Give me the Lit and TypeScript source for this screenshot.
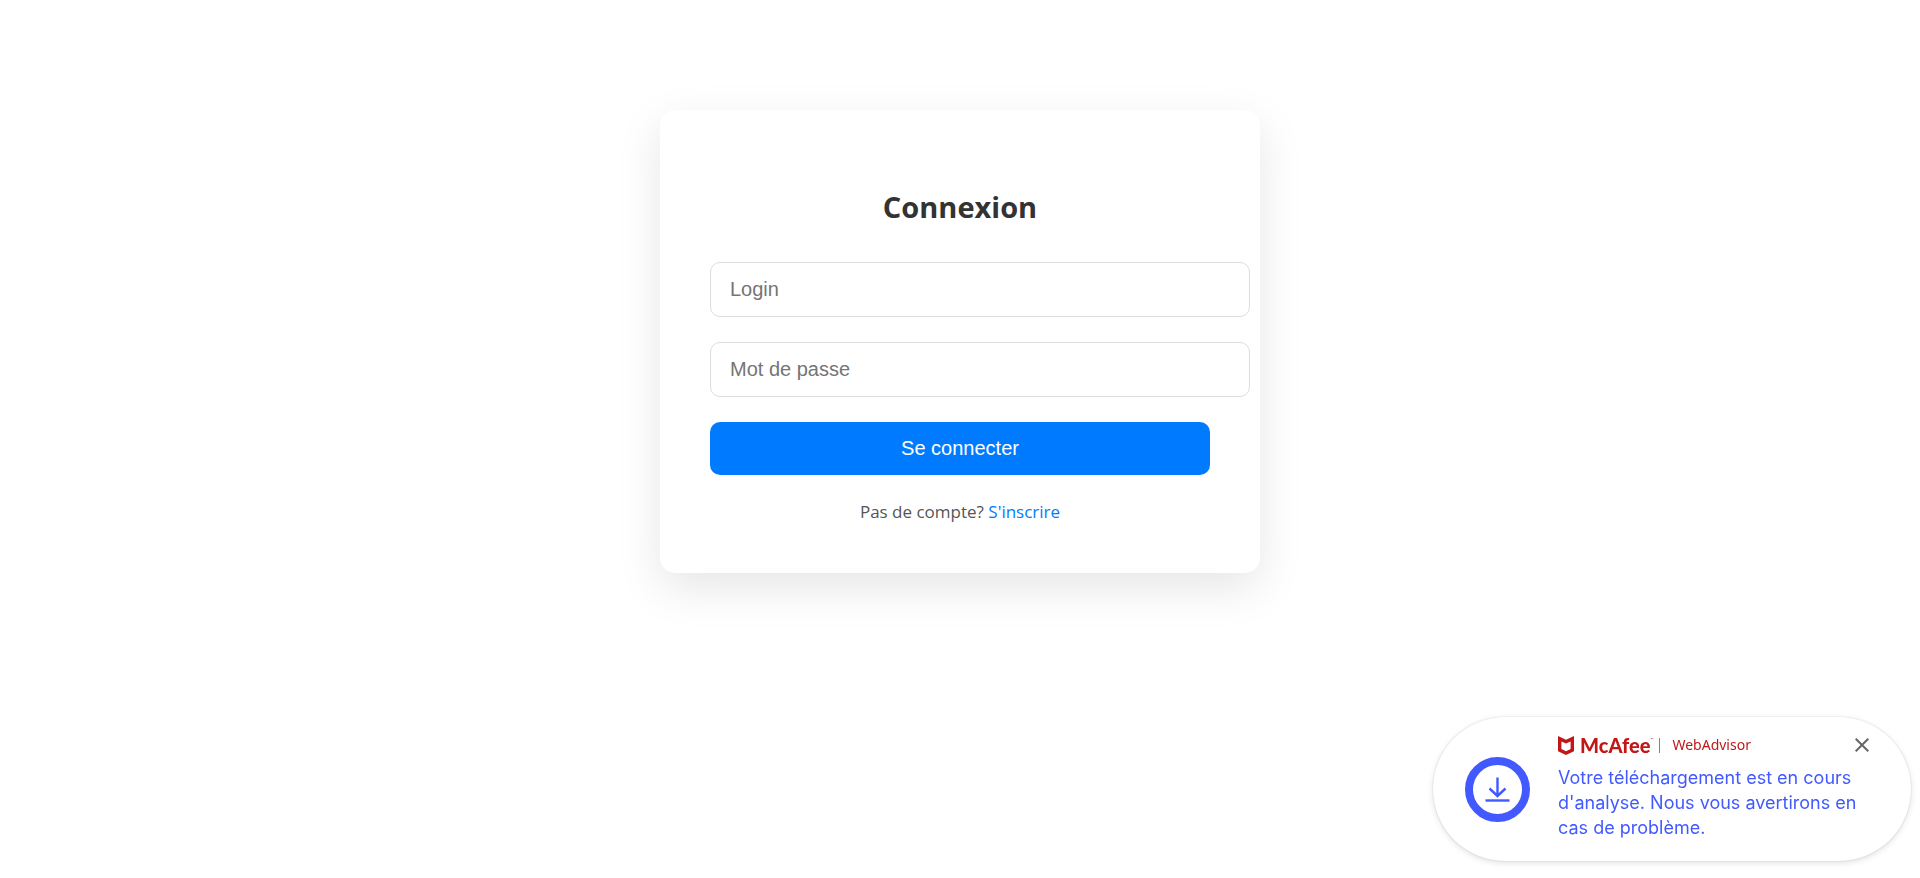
import { LitElement, html, css } from "lit";
import { customElement } from "lit/decorators.js";

@customElement("login-card")
class LoginCard extends LitElement {
  static styles = css`
    :host {
      display: block;
      width: 100%;
      max-width: 600px;
    }
    .card {
      padding: 50px;
      border-radius: 15px;
      background: #fff;
      box-shadow: 0 15px 45px rgba(0, 0, 0, 0.1);
    }
    .title {
      margin: 24px 0 33px;
      font-size: 29px;
      line-height: 45px;
      font-weight: 700;
      text-align: center;
      color: #333;
    }
    .form {
      display: flex;
      flex-direction: column;
      gap: 25px;
    }
    .field {
      display: flex;
    }
    .input {
      flex: none;
      box-sizing: content-box;
      width: 100%;
      height: 23px;
      padding: 15px 19px;
      border: 1px solid #ddd;
      border-radius: 10px;
      background: #fff;
      font: 20px/23px "Liberation Sans", Arial, sans-serif;
      color: #333;
    }
    .input::placeholder {
      color: #757575;
      opacity: 1;
    }
    .submit {
      padding: 15px;
      border: 0;
      border-radius: 10px;
      background: #007bff;
      color: #fff;
      font: 20px/23px "Liberation Sans", Arial, sans-serif;
      cursor: pointer;
    }
    .note {
      margin: 25px 0 0;
      font-size: 17px;
      line-height: 23px;
      text-align: center;
      color: #555;
    }
    .link {
      color: #007bff;
      text-decoration: none;
    }
  `;

  render() {
    return html`
      <section class="card">
        <h2 class="title">Connexion</h2>
        <form class="form" @submit=${(e: Event) => e.preventDefault()}>
          <div class="field">
            <input class="input" id="login" type="text" placeholder="Login" aria-label="Login" />
          </div>
          <div class="field">
            <input class="input" id="password" type="password" placeholder="Mot de passe" aria-label="Mot de passe" />
          </div>
          <button class="submit" type="submit">Se connecter</button>
        </form>
        <p class="note">Pas de compte? <a class="link" href="#">S'inscrire</a></p>
      </section>
    `;
  }
}

@customElement("scan-toast")
class ScanToast extends LitElement {
  static styles = css`
    :host {
      display: block;
    }
    .toast {
      display: flex;
      align-items: center;
      gap: 28px;
      box-sizing: border-box;
      min-height: 144px;
      padding: 16px 42px 16px 32px;
      border-radius: 72px;
      background: #fff;
      box-shadow: 0 0 2px rgba(0, 0, 0, 0.16), 0 2px 6px rgba(0, 0, 0, 0.12);
    }
    .ring {
      flex: none;
      width: 65px;
      height: 65px;
    }
    .body {
      width: 311px;
      padding-bottom: 4px;
    }
    .head {
      display: flex;
      align-items: center;
      height: 22px;
      color: #c01818;
    }
    .shield {
      width: 16px;
      height: 19px;
      margin-right: 6px;
    }
    .brand {
      font: 900 20px/24px Lato, sans-serif;
    }
    .mark {
      align-self: flex-start;
      font: 4px/12px Lato, sans-serif;
    }
    .bar {
      width: 1px;
      height: 15px;
      margin: 0 12px 0 6px;
      background: #d86060;
    }
    .product {
      font: 14px/20px "Noto Sans", sans-serif;
    }
    .close {
      display: flex;
      margin-left: auto;
      padding: 0;
      border: 0;
      background: none;
      cursor: pointer;
    }
    .message {
      margin: 9px 0 0;
      font: 18px/25px Inter, sans-serif;
      color: #4259ff;
      white-space: nowrap;
    }
  `;

  render() {
    return html`
      <aside class="toast">
        <svg class="ring" viewBox="0 0 65 65" fill="none" stroke="#4259ff" aria-hidden="true">
          <circle cx="32.5" cy="32.5" r="28.5" stroke-width="8" />
          <path d="M32.5 20.5v18M24.5 31.5l8 7.5 8-7.5" stroke-width="2.4" />
          <path d="M20.5 43.5h24" stroke-width="2.4" />
        </svg>
        <div class="body">
          <div class="head">
            <svg class="shield" viewBox="0 0 16 19" aria-hidden="true">
              <path
                fill="#c01818"
                fill-rule="evenodd"
                d="M0 0 8 3.8 16 0V15.2L8 19 0 15.2ZM3.4 5.4V13L8 15.2 12.6 13V5.4L8 7.6Z"
              />
            </svg>
            <span class="brand">McAfee</span><span class="mark">™</span>
            <span class="bar"></span>
            <span class="product">WebAdvisor</span>
            <button class="close" type="button" aria-label="Fermer">
              <svg width="14" height="14" viewBox="0 0 14 14" stroke="#666" stroke-width="2" aria-hidden="true">
                <path d="M.7.7l12.6 12.6M13.3.7.7 13.3" />
              </svg>
            </button>
          </div>
          <p class="message">
            Votre téléchargement est en cours<br />d'analyse. Nous vous avertirons en<br />cas de problème.
          </p>
        </div>
      </aside>
    `;
  }
}

@customElement("app-root")
class AppRoot extends LitElement {
  static styles = css`
    :host {
      display: block;
      min-height: 100vh;
      background: #fff;
      font-family: "Segoe UI", "Open Sans", sans-serif;
    }
    .page {
      display: flex;
      justify-content: center;
      padding: 110px 20px 0;
    }
    .corner {
      position: fixed;
      right: 9px;
      bottom: 17px;
    }
  `;

  render() {
    return html`
      <main class="page"><login-card></login-card></main>
      <scan-toast class="corner"></scan-toast>
    `;
  }
}
